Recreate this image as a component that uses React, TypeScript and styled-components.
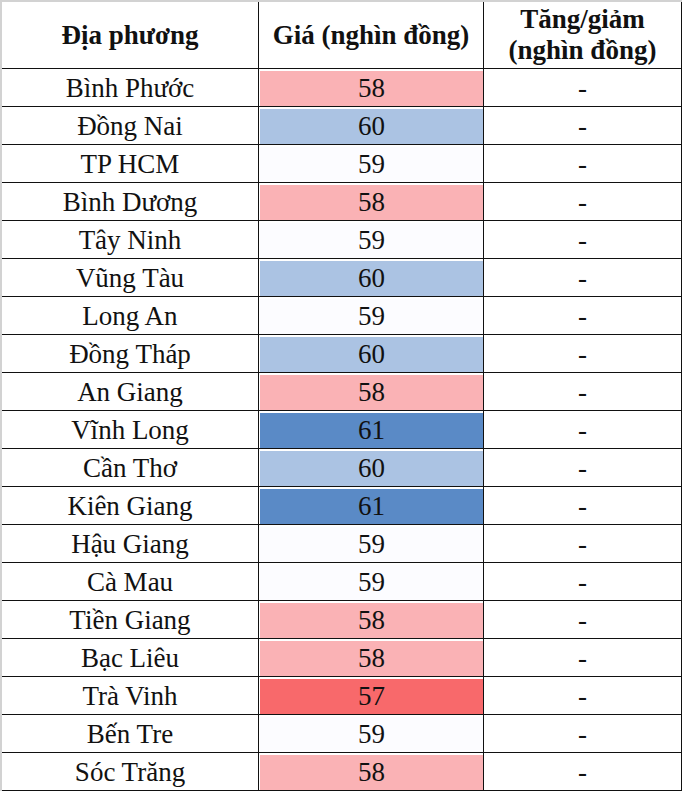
import styled, { createGlobalStyle } from "styled-components";

const GlobalStyle = createGlobalStyle`
    html, body {
        margin: 0;
        padding: 0;
        background: #fff;
    }
    body {
        font-family: "Liberation Serif", "Times New Roman", serif;
        color: #111;
    }
`;

// excel style 3 colour scale: 57 red, 59 white, 61 blue
const SCALE: Record<number, string> = {
    57: "#f8696b",
    58: "#fab2b5",
    59: "#fcfcff",
    60: "#abc3e3",
    61: "#5a8ac6",
};

const ROWS: [string, number][] = [
    ["Bình Phước", 58],
    ["Đồng Nai", 60],
    ["TP HCM", 59],
    ["Bình Dương", 58],
    ["Tây Ninh", 59],
    ["Vũng Tàu", 60],
    ["Long An", 59],
    ["Đồng Tháp", 60],
    ["An Giang", 58],
    ["Vĩnh Long", 61],
    ["Cần Thơ", 60],
    ["Kiên Giang", 61],
    ["Hậu Giang", 59],
    ["Cà Mau", 59],
    ["Tiền Giang", 58],
    ["Bạc Liêu", 58],
    ["Trà Vinh", 57],
    ["Bến Tre", 59],
    ["Sóc Trăng", 58],
];

const Table = styled.table`
    border-collapse: collapse;
    table-layout: fixed;
    width: 677px;
    border-left: 2px solid #d2d2d2;
    border-top: 2px solid #d2d2d2;
    font-family: "Liberation Serif", "Times New Roman", serif;
    color: #111;
`;

const Row = styled.tr`
    height: 38px;
`;

const HeadCell = styled.th<{ w: number }>`
    width: ${p => p.w}px;
    height: 66px;
    padding: 0;
    border: 1px solid #111;
    font-size: 27px;
    font-weight: 700;
    line-height: 31px;
    text-align: center;
    vertical-align: middle;
`;

const Cell = styled.td`
    height: 35px;
    padding: 0;
    border: 1px solid #111;
    font-size: 27px;
    line-height: 30px;
    text-align: center;
    vertical-align: middle;
    overflow: hidden;
`;

const PriceCell = styled(Cell)`
    padding: 1px 0 0 1px;
`;

const Fill = styled.div<{ bg: string }>`
    height: 35px;
    line-height: 35px;
    background: ${p => p.bg};
`;

export default function App() {
    return (
        <>
            <GlobalStyle />
            <Table>
                <thead>
                    <tr>
                        <HeadCell w={256}>Địa phương</HeadCell>
                        <HeadCell w={224}>Giá (nghìn đồng)</HeadCell>
                        <HeadCell w={197}>Tăng/giảm<br />(nghìn đồng)</HeadCell>
                    </tr>
                </thead>
                <tbody>
                    {ROWS.map(([name, price]) => (
                        <Row key={name}>
                            <Cell>{name}</Cell>
                            <PriceCell>
                                <Fill bg={SCALE[price]}>{price}</Fill>
                            </PriceCell>
                            <Cell>-</Cell>
                        </Row>
                    ))}
                </tbody>
            </Table>
        </>
    );
}
